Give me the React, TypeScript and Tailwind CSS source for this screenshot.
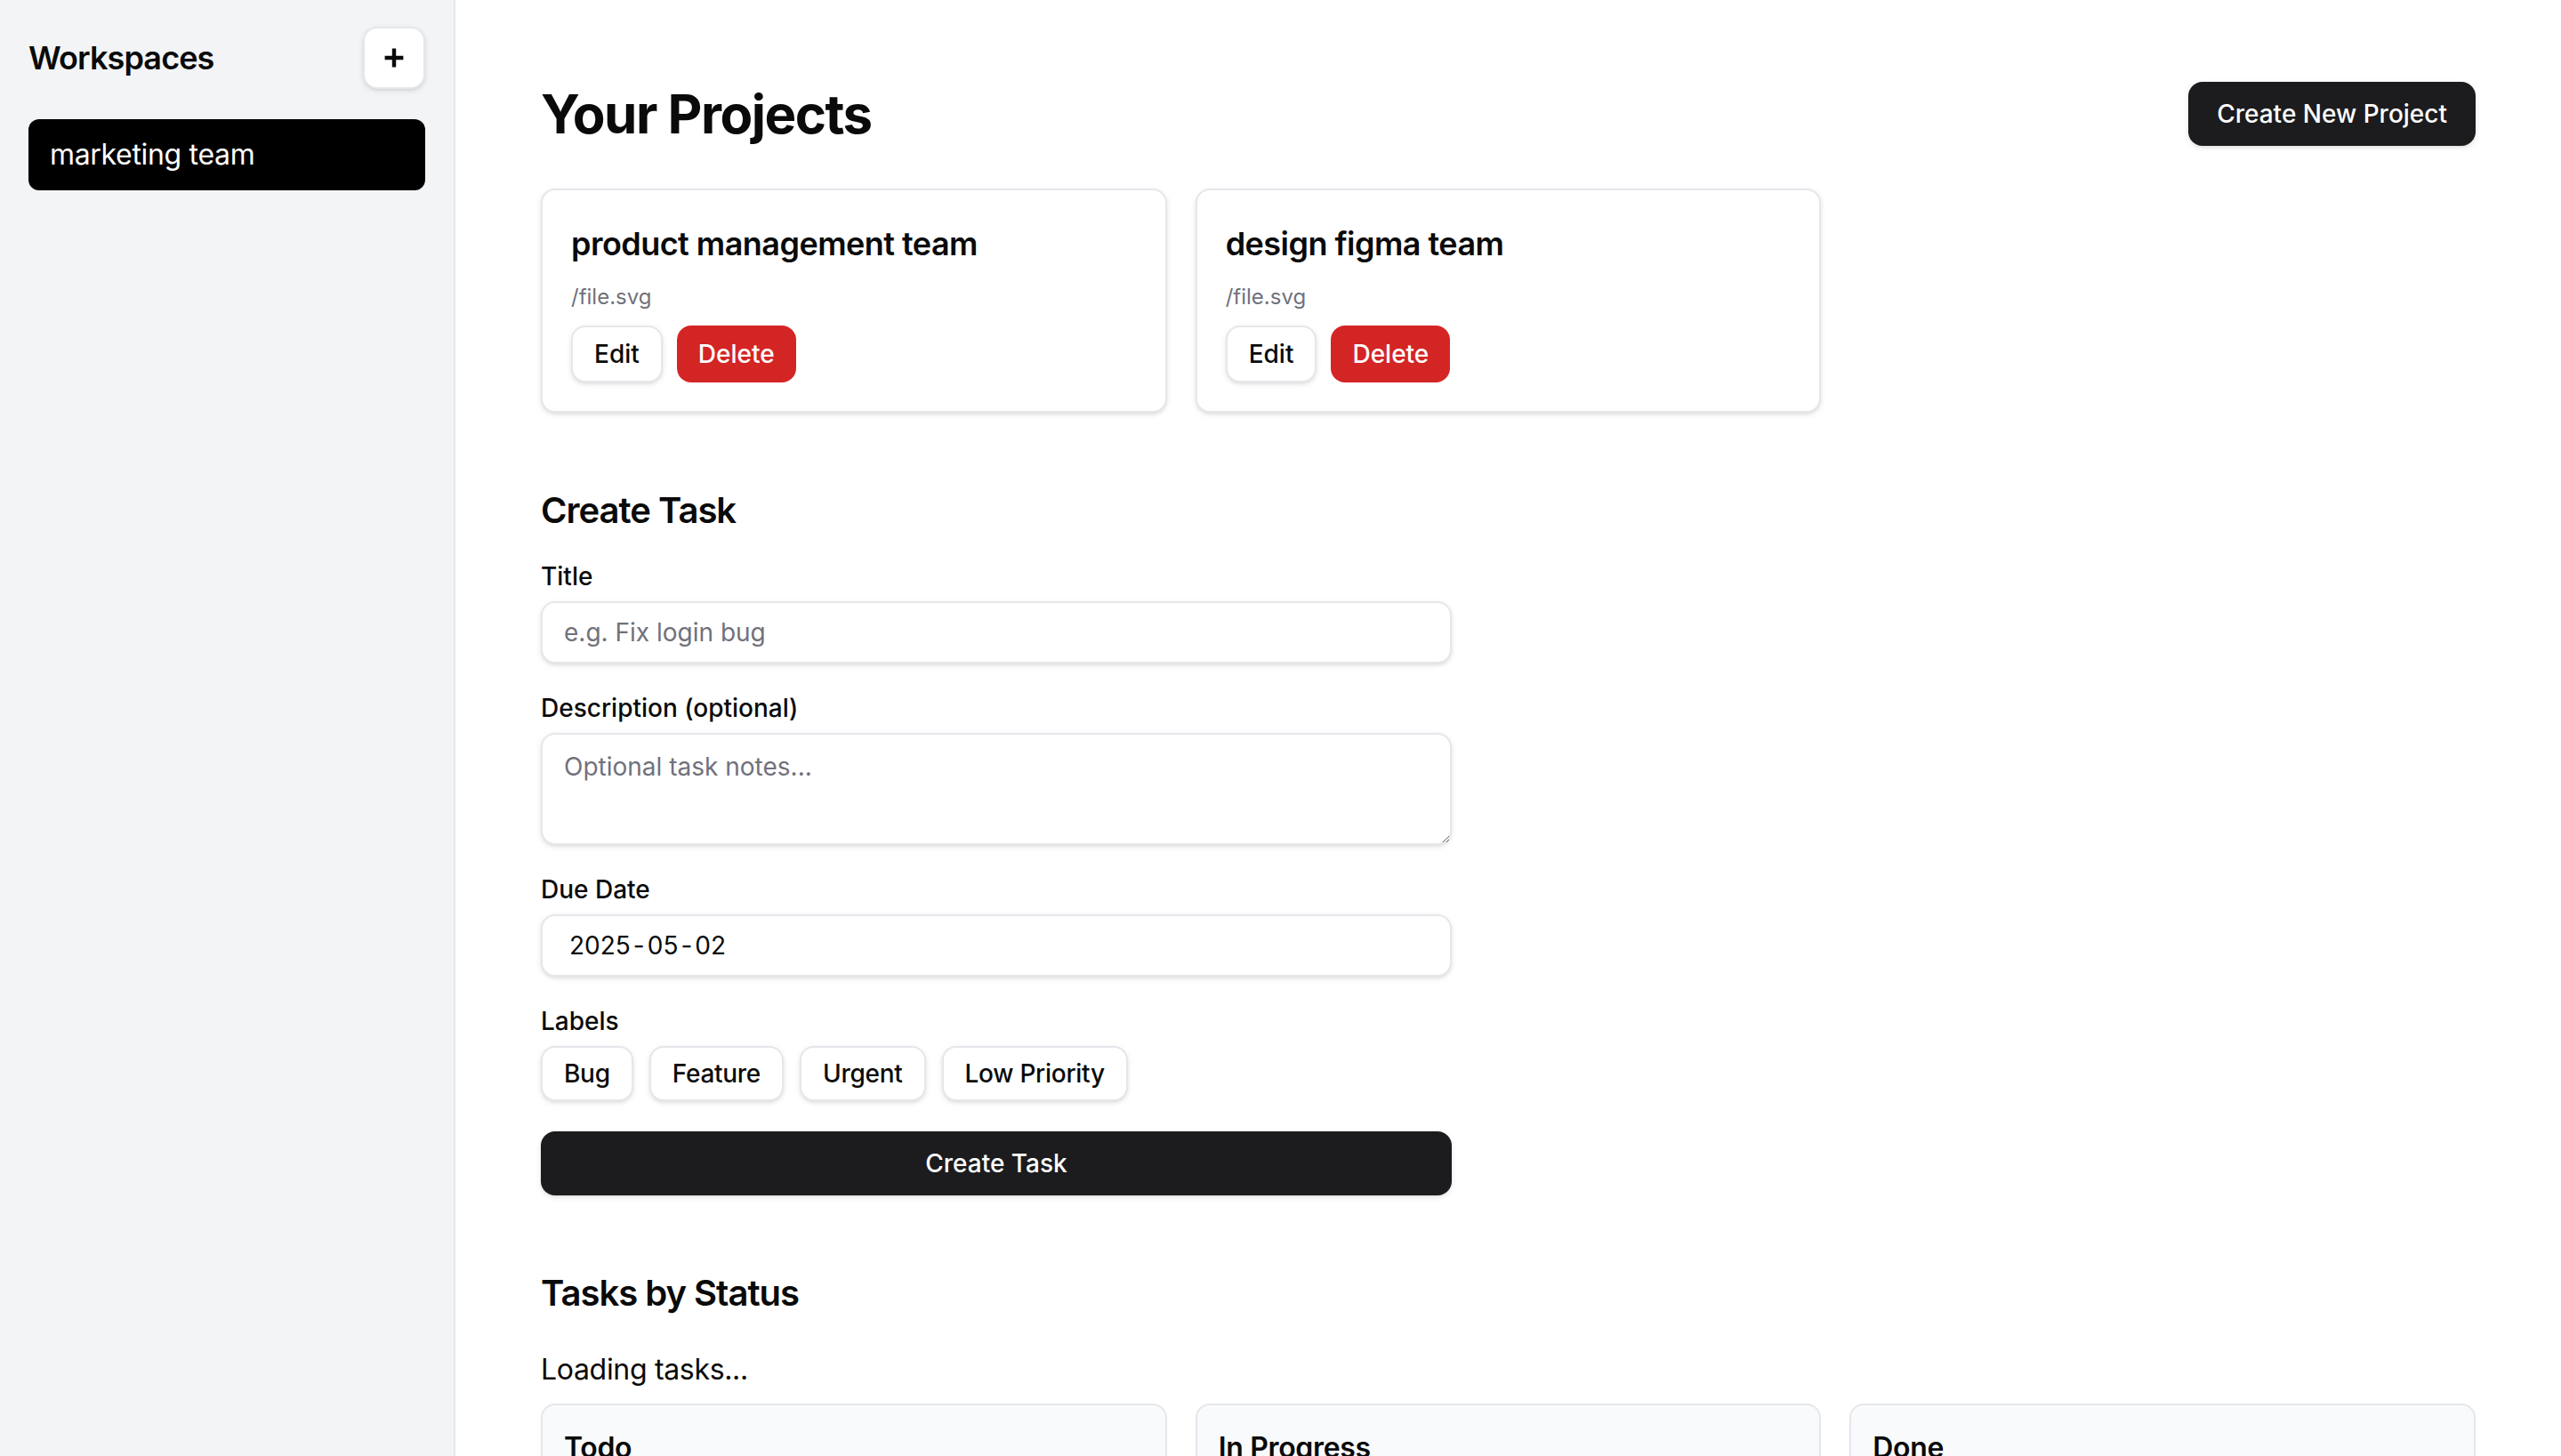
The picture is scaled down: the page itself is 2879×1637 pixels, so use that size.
import React from "react";

const projects = ["product management team", "design figma team"];
const labels = ["Bug", "Feature", "Urgent", "Low Priority"];
const statuses = ["Todo", "In Progress", "Done"];

export default function App() {
  return (
    <div className="[zoom:2] flex min-h-[820px] bg-white font-[Inter,sans-serif] text-neutral-950 antialiased">
      <aside className="w-64 shrink-0 border-r border-gray-200 bg-gray-100 px-4 pt-[15px]">
        <div className="mb-[17px] flex items-center justify-between">
          <h2 className="text-lg font-semibold tracking-tight">Workspaces</h2>
          <button className="flex h-[35px] w-[35px] items-center justify-center rounded-lg border border-gray-200 bg-white shadow-sm">
            <svg width="11" height="11" viewBox="0 0 11 11">
              <path d="M5.5 0.3v10.4M0.3 5.5h10.4" stroke="#0a0a0a" strokeWidth="2.2" />
            </svg>
          </button>
        </div>
        <div className="rounded-md bg-black px-3 py-2 text-base tracking-[-0.01em] text-white">marketing team</div>
      </aside>

      <main className="min-w-0 flex-1 px-12 pt-[46px]">
        <div className="mb-6 flex items-center justify-between">
          <h1 className="text-3xl font-bold tracking-tight">Your Projects</h1>
          <button className="h-9 rounded-lg bg-[#1c1c1e] px-4 text-sm font-medium text-white shadow-sm">
            Create New Project
          </button>
        </div>

        <div className="grid grid-cols-3 gap-4">
          {projects.map((p) => (
            <div key={p} className="rounded-lg border border-gray-200 bg-white p-4 shadow-sm">
              <h3 className="mb-2 text-lg font-semibold tracking-[-0.015em]">{p}</h3>
              <p className="text-xs text-zinc-500">/file.svg</p>
              <div className="mt-2 flex gap-2">
                <button className="h-8 rounded-lg border border-gray-200 bg-white px-3 text-sm font-medium shadow-sm">
                  Edit
                </button>
                <button className="h-8 rounded-lg bg-[#d42525] px-3 text-sm font-medium text-white">Delete</button>
              </div>
            </div>
          ))}
        </div>

        <section className="mt-[41px]">
          <h2 className="text-xl font-semibold tracking-tight">Create Task</h2>
          <div className="mt-[13px] flex max-w-lg flex-col gap-[15px]">
            <div>
              <label className="mb-1 block text-sm font-medium">Title</label>
              <input
                placeholder="e.g. Fix login bug"
                className="block h-[35px] w-full rounded-lg border border-gray-200 bg-white px-3 text-sm shadow-sm outline-none placeholder:text-zinc-500"
              />
            </div>
            <div>
              <label className="mb-1 block text-sm font-medium">Description (optional)</label>
              <textarea
                placeholder="Optional task notes..."
                className="block h-[63px] w-full rounded-lg border border-gray-200 bg-white px-3 py-2 text-sm shadow-sm outline-none placeholder:text-zinc-500"
              />
            </div>
            <div>
              <label className="mb-1 block text-sm font-medium">Due Date</label>
              <div className="flex h-[35px] w-full items-center rounded-lg border border-gray-200 bg-white pl-[15px] text-sm shadow-sm">
                <span>2025</span>
                <span className="mx-[1.5px]">-</span>
                <span>05</span>
                <span className="mx-[1.5px]">-</span>
                <span>02</span>
              </div>
            </div>
            <div>
              <label className="mb-1 block text-sm font-medium">Labels</label>
              <div className="flex flex-wrap gap-[9px]">
                {labels.map((l) => (
                  <button
                    key={l}
                    className="h-[31px] rounded-lg border border-gray-200 bg-white px-3 text-sm font-medium tracking-[-0.01em] shadow-sm"
                  >
                    {l}
                  </button>
                ))}
              </div>
            </div>
            <button className="mt-[2px] h-9 w-full rounded-lg bg-[#1c1c1e] text-sm font-medium text-white shadow-sm">
              Create Task
            </button>
          </div>
        </section>

        <section className="mt-[41px] pb-12">
          <h2 className="text-xl font-semibold tracking-tight">Tasks by Status</h2>
          <p className="mt-[17px] text-base tracking-[-0.01em]">Loading tasks...</p>
          <div className="mt-[7px] grid grid-cols-3 gap-4">
            {statuses.map((s) => (
              <div key={s} className="min-h-[160px] rounded-lg border border-gray-200 bg-gray-50 p-3">
                <h3 className="text-base font-semibold tracking-[-0.01em]">{s}</h3>
              </div>
            ))}
          </div>
        </section>
      </main>
    </div>
  );
}
